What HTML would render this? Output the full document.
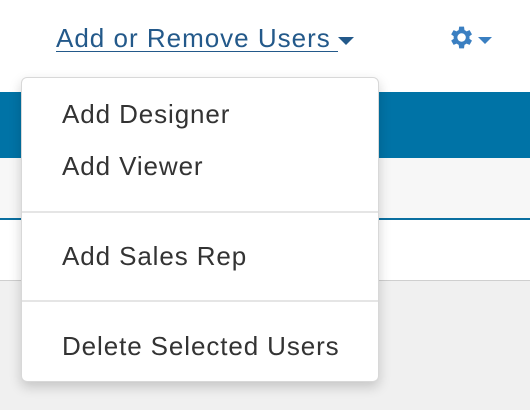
<!DOCTYPE html>
<html><head><style>
*{margin:0;padding:0;box-sizing:border-box}
body{width:530px;height:410px;overflow:hidden;background:#f0f0f0;font-family:"Liberation Sans",sans-serif;position:relative}
.abs{position:absolute}
.t{font-size:26px;letter-spacing:0.9px;color:#333;white-space:nowrap}
</style></head><body>
<div class="abs" style="left:0;top:0;width:530px;height:92px;background:#fff"></div>
<div class="abs" style="left:0;top:92px;width:530px;height:66px;background:#0073a6"></div>
<div class="abs" style="left:0;top:158px;width:530px;height:60px;background:#f7f7f7"></div>
<div class="abs" style="left:0;top:218px;width:530px;height:2px;background:#0a6fa0"></div>
<div class="abs" style="left:0;top:220px;width:530px;height:60px;background:#fff"></div>
<div class="abs" style="left:0;top:280px;width:530px;height:1px;background:#cfcfcf"></div>

<div class="abs t" style="left:56px;top:23px;color:#23598a;line-height:30px;letter-spacing:1px;border-bottom:1px solid #23598a;width:282px;height:29px">Add or Remove Users</div>
<svg class="abs" style="left:338px;top:37px" width="16" height="8"><path d="M0 0H16L8 8Z" fill="#23598a"/></svg>
<svg class="abs" style="left:446px;top:23px" width="29" height="29" viewBox="0 0 24 24"><path fill="#3a7fc1" d="M19.4 13a7.5 7.5 0 0 0 0-2l2.1-1.6-2-3.5-2.5 1a7.4 7.4 0 0 0-1.7-1L14.9 3h-4l-.4 2.9a7.4 7.4 0 0 0-1.7 1l-2.5-1-2 3.5L6.4 11a7.5 7.5 0 0 0 0 2l-2.1 1.6 2 3.5 2.5-1a7.4 7.4 0 0 0 1.7 1l.4 2.9h4l.4-2.9a7.4 7.4 0 0 0 1.7-1l2.5 1 2-3.5zM12.9 15.5a3.5 3.5 0 1 1 0-7 3.5 3.5 0 0 1 0 7z"/></svg>
<svg class="abs" style="left:478px;top:37px" width="14" height="7"><path d="M0 0H14L7 7Z" fill="#3a7fc1"/></svg>

<div class="abs" style="left:21px;top:77px;width:358px;height:305px;background:#fff;border:1px solid #d8d8d8;border-radius:6px;box-shadow:0 5px 12px rgba(0,0,0,.18)">
<div class="abs t" style="left:40px;top:21px">Add Designer</div>
<div class="abs t" style="left:40px;top:73px">Add Viewer</div>
<div class="abs" style="left:0;top:133px;width:356px;height:2px;background:#e5e5e5"></div>
<div class="abs t" style="left:40px;top:163px">Add Sales Rep</div>
<div class="abs" style="left:0;top:222px;width:356px;height:2px;background:#e5e5e5"></div>
<div class="abs t" style="left:40px;top:253px">Delete Selected Users</div>
</div>
</body></html>
